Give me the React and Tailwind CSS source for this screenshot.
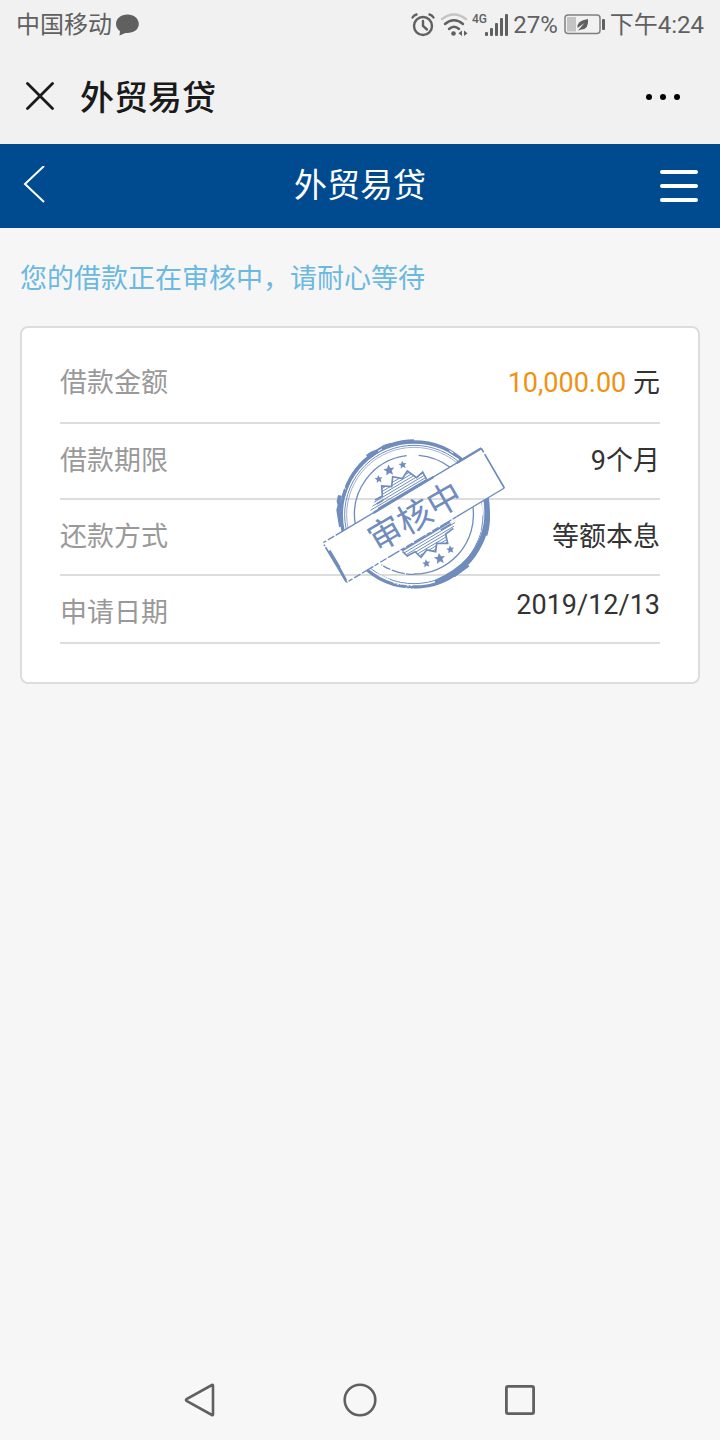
import React from 'react';

const details = [
  { label: '借款金额', amount: '10,000.00', value: '元', rowClass: 'pb-[19px]', valueClass: 'leading-10' },
  { label: '借款期限', value: '9个月', rowClass: 'pb-[17px]', valueClass: 'leading-10' },
  { label: '还款方式', value: '等额本息', rowClass: 'pb-[17px]', valueClass: 'leading-10' },
  { label: '申请日期', value: '2019/12/13', rowClass: 'pb-[9px]', valueClass: 'leading-6' }
];

const stars = [
  { x: 206, y: 147, scale: 0.8 },
  { x: 237, y: 120, scale: 1.1 },
  { x: 278, y: 104, scale: 0.8 },
  { x: 349, y: 400, scale: 0.8 },
  { x: 389, y: 385, scale: 1.1 },
  { x: 421, y: 358, scale: 0.8 }
];

const AlarmIcon = () => (
  <svg width="26" height="28" viewBox="0 0 26 28" fill="none" stroke="#606060" strokeWidth="2.400" strokeLinecap="round">
    <circle cx="13" cy="15" r="9" />
    <path d="M13 10v5l4 3.500M2.500 6.500Q4 4 6.500 3.500M19.500 3.500Q22 4 23.500 6.500" />
  </svg>
);

const WifiIcon = () => (
  <svg width="28" height="28" viewBox="0 0 28 28" fill="none" strokeWidth="2.400" strokeLinecap="round">
    <path d="M2 8Q14 -1 26 8" stroke="#c4c4c4" />
    <path d="M5 13Q14 5.500 23 13M9 18Q14 13.500 19 18" stroke="#606060" />
    <circle cx="13.500" cy="22.500" r="2.300" fill="#606060" />
    <path d="M22 19.500v5.500l-3.500-2.700zM24 19.500v5.500l3.500-2.700z" fill="#606060" />
  </svg>
);

const SignalIcon = () => (
  <svg width="37" height="28" viewBox="0 0 37 28" fill="#606060">
    <text x="0" y="12" fontSize="12" fontWeight="500" className="font-['Roboto',sans-serif]">4G</text>
    <rect x="13" y="21" width="3" height="4" rx="1" />
    <rect x="18" y="17" width="3" height="8" rx="1" />
    <rect x="23" y="12" width="3" height="13" rx="1" />
    <rect x="28" y="7" width="3" height="18" rx="1" />
    <rect x="33" y="3" width="3" height="22" rx="1" />
  </svg>
);

const BatteryIcon = () => (
  <svg width="42" height="28" viewBox="0 0 42 28" fill="none">
    <rect x="1" y="4" width="35" height="18.500" rx="3" stroke="#808080" strokeWidth="1.500" />
    <rect x="3" y="6" width="9" height="14.500" fill="#c4c4c4" />
    <rect x="38" y="8" width="3" height="11" rx="1" fill="#606060" />
    <path d="M24 8Q25 18 17.500 18.500L14 19.500L20.500 12L13.500 17Q12.500 9.500 24 8z" fill="#606060" />
  </svg>
);

const StatusBar = () => (
  <div className="flex h-12 items-center justify-between px-4 pt-0.5 text-[24px] text-[#606060]">
    <div className="flex items-center gap-1">
      <span>中国移动</span>
      <svg width="24" height="24" viewBox="0 0 24 24" fill="#606060">
        <path d="M11.500 1.500C5 1.500 0 5.500 0 11c0 3 1.500 5.500 4 7.200L3.500 22.500l6-2.500c8 .5 13.300-3.500 13.300-9C22.800 5.500 18 1.500 11.500 1.500z" />
      </svg>
    </div>
    <div className="flex items-center">
      <AlarmIcon />
      <span className="ml-1"><WifiIcon /></span>
      <span className="ml-1"><SignalIcon /></span>
      <span className="ml-1">27%</span>
      <span className="ml-1.5"><BatteryIcon /></span>
      <span className="ml-1">下午4:24</span>
    </div>
  </div>
);

const Stamp = () => (
  <svg
    className="pointer-events-none absolute left-1/2 top-27 -ml-10"
    width="190"
    height="156"
    viewBox="30 18 570 468"
    fill="none"
    stroke="#6f8cbd"
    role="img"
    aria-label="审核中"
  >
    <defs>
      <clipPath id="stampTop">
        <path d="M0 0H600V4L514 55L40 338L0 362z" />
      </clipPath>
      <clipPath id="stampBottom">
        <path d="M0 523L110 457L583 174L600 164V520H0z" />
      </clipPath>
      <clipPath id="burstTop">
        <path d="M180 245L195 210L217 198L215 168L245 170L248 140L277 146L292 123L320 143L338 126L350 148z" />
      </clipPath>
      <clipPath id="burstBottom">
        <path d="M278 365L292 378L315 365L333 382L350 360L377 365L380 340L413 340L407 312L430 295L438 270z" />
      </clipPath>
    </defs>

    <g clipPath="url(#stampTop)">
      <circle cx="312" cy="254" r="218" strokeWidth="10" />
      <circle cx="312" cy="254" r="208" strokeWidth="3" />
      <circle cx="312" cy="254" r="202" strokeWidth="2" />
      <path d="M100 200Q122 122 180 78Q240 34 312 33" strokeWidth="10" />
      <path d="M170 78l14-10 20-8 18-12 22-6" strokeWidth="7" />
      <path d="M90 196l-4 18 3 12-4 14 8 50" strokeWidth="12" />
      <path d="M100 160l6 18M204 64l12-7M418 62l12 7M432 80l14 8" stroke="#fff" strokeWidth="3" />
      <path d="M136 284A178 178 0 0 1 290 77M326 76A178 178 0 0 1 420 112" strokeWidth="4" />
    </g>

    <g clipPath="url(#stampBottom)">
      <circle cx="312" cy="254" r="217" strokeWidth="10" />
      <circle cx="312" cy="254" r="207" strokeWidth="3" />
      <path d="M528 200Q546 310 478 388Q440 430 376 458" strokeWidth="16" />
      <path d="M537 245q2 40-8 72" strokeWidth="6" />
      <path d="M474 404l-44 32" strokeWidth="14" />
      <path d="M518 216v40M512 300q-14 50-50 84M200 430l40 20" stroke="#fff" strokeWidth="3" />
      <path d="M250 458l16 6 12-4 16 8 14-2M286 474l34 4" stroke="#fff" strokeWidth="3" strokeDasharray="6 5" />
      <path d="M489 232A178 178 0 0 1 312 432" strokeWidth="4" />
      <path d="M312 433A178 178 0 0 1 214 404" strokeWidth="4" strokeDasharray="24 4 40 5" />
    </g>

    {/* banner */}
    <path d="M40 338L514 55" strokeWidth="4" strokeDasharray="10 6 22 5 600" />
    <path d="M190 249L370 141M440 99L514 55" strokeWidth="7" />
    <path d="M514 55L583 174" strokeWidth="5" strokeDasharray="14 6 150" />
    <path d="M583 174L440 260" strokeWidth="4" />
    <path d="M440 260L110 457" strokeWidth="4" strokeDasharray="14 4 40 5 22 6" />
    <path d="M42 344L110 457" strokeWidth="5" strokeDasharray="5 4 130" />
    <path d="M58 362l30 50M84 408l24 44" strokeWidth="8" />

    {/* sunbursts */}
    <path
      d="M195 210L217 198L215 168L245 170L248 140L277 146L292 123L320 143L338 126L350 148M200 222L220 210"
      strokeWidth="5"
    />
    <path
      d="M278 365L292 378L315 365L333 382L350 360L377 365L380 340L413 340L407 312L430 295M392 300L424 282"
      strokeWidth="5"
    />
    <g clipPath="url(#burstTop)" strokeWidth="3">
      <path d="M180 250L370 137M180 242L370 129M180 233L370 120M180 224L370 111M180 215L370 102M180 206L370 93M180 197L370 84" />
    </g>
    <g clipPath="url(#burstBottom)" strokeWidth="3">
      <path d="M260 374L450 261M260 382L450 269M260 391L450 278M260 400L450 287M260 409L450 296M260 418L450 305M260 427L450 314" />
    </g>
    <path d="M204 236L350 149M276 362L420 276" strokeWidth="5" />

    {stars.map((star) => (
      <path
        key={`${star.x}-${star.y}`}
        d="M0 -15L4.500 -5L15 -4.500L7 3L9.500 14L0 8L-9.500 14L-7 3L-15 -4.500L-4.500 -5z"
        transform={`translate(${star.x} ${star.y}) rotate(-8) scale(${star.scale})`}
        fill="#6f8cbd"
        stroke="none"
      />
    ))}

    <text
      transform="translate(314 259) rotate(-30)"
      y="37"
      textAnchor="middle"
      fontSize="102"
      fill="#6f8cbd"
      stroke="none"
    >
      审核中
    </text>
  </svg>
);

const DetailRow = ({ item }) => (
  <div className={`flex items-start justify-between border-b-2 border-[#dddddd] pt-[17px] ${item.rowClass}`}>
    <dt className="leading-10 text-[#999999]">{item.label}</dt>
    <dd className={`text-[#333333] ${item.valueClass}`}>
      {item.amount && <span className="text-[#ee9211]">{item.amount} </span>}
      {item.value}
    </dd>
  </div>
);

const App = () => {
  return (
    <div className="flex min-h-screen flex-col bg-[#f6f6f6] font-['Roboto','Noto_Sans_CJK_SC',sans-serif]">
      <div className="bg-[#f1f1f1]">
        <StatusBar />
        <div className="flex h-24 items-center px-[26px]">
          <button type="button" aria-label="关闭">
            <svg width="28" height="28" viewBox="0 0 28 28" fill="none" stroke="#1a1a1a" strokeWidth="2.800" strokeLinecap="round">
              <path d="M1.500 1.500L26.500 26.500M26.500 1.500L1.500 26.500" />
            </svg>
          </button>
          <span className="ml-[26px] flex-1 pt-1 text-[34px] font-medium text-[#1a1a1a]">外贸易贷</span>
          <button type="button" aria-label="更多" className="mr-3.5">
            <svg width="36" height="28" viewBox="0 0 36 28" fill="#000">
              <circle cx="5" cy="15" r="3" />
              <circle cx="19" cy="15" r="3" />
              <circle cx="33" cy="15" r="3" />
            </svg>
          </button>
        </div>
      </div>

      <header className="grid h-21 grid-cols-3 items-center bg-[#004b8f] px-[22px] text-white">
        <button type="button" aria-label="返回" className="justify-self-start">
          <svg width="24" height="40" viewBox="0 0 24 40" fill="none" stroke="currentColor" strokeWidth="2">
            <path d="M22 -.5L3 17.500L22 35.500" transform="translate(0 .5)" />
          </svg>
        </button>
        <h1 className="text-center text-[33px]">外贸易贷</h1>
        <button type="button" aria-label="菜单" className="flex flex-col gap-[10px] justify-self-end">
          <span className="h-1 w-[38px] rounded-full bg-white" />
          <span className="h-1 w-[38px] rounded-full bg-white" />
          <span className="h-1 w-[38px] rounded-full bg-white" />
        </button>
      </header>

      <main className="flex-1 px-5 text-[27px]">
        <p className="pb-[27px] pt-[31px] leading-10 text-[#6bb8e0]">您的借款正在审核中，请耐心等待</p>
        <section className="relative rounded-lg border-2 border-[#dddddd] bg-white px-[38px] pb-[38px] pt-[18px]">
          <dl>
            {details.map((item) => (
              <DetailRow key={item.label} item={item} />
            ))}
          </dl>
          <Stamp />
        </section>
      </main>

      <nav className="flex h-20 items-center justify-center bg-[#f7f7f7]">
        <button type="button" aria-label="返回" className="flex w-40 justify-center">
          <svg width="36" height="36" viewBox="0 0 36 36" fill="none" stroke="#606060" strokeWidth="2.600" strokeLinejoin="round">
            <path d="M31 3.500V32.500Q31 33.500 30 33L4.500 18.800Q3.500 18 4.500 17.200L30 3Q31 2.500 31 3.500z" />
          </svg>
        </button>
        <button type="button" aria-label="主页" className="flex w-40 justify-center">
          <svg width="36" height="36" viewBox="0 0 36 36" fill="none" stroke="#606060" strokeWidth="2.600">
            <circle cx="18" cy="18" r="15.300" />
          </svg>
        </button>
        <button type="button" aria-label="最近任务" className="flex w-40 justify-center">
          <svg width="36" height="36" viewBox="0 0 36 36" fill="none" stroke="#606060" strokeWidth="2.800">
            <rect x="4.400" y="4.400" width="27.200" height="27.200" rx="1.500" />
          </svg>
        </button>
      </nav>
    </div>
  );
};

export default App;
